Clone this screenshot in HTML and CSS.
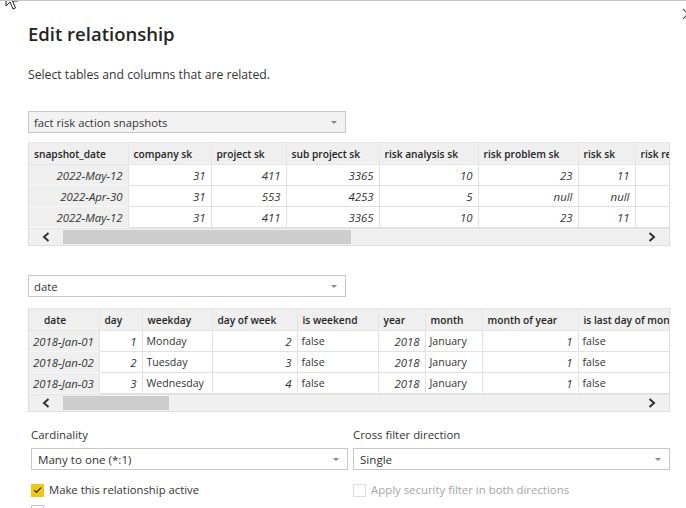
FILE: index.html
```html
<!DOCTYPE html>
<html>
<head>
<meta charset="utf-8">
<link rel="stylesheet" href="styles.css">
</head>
<body>
<div class="dialog">
  <svg class="cursor" width="14" height="22" viewBox="0 0 14 22"><path d="M1 1 L1 17 L5 13 L8 20 L10.5 19 L7.5 12 L12.5 12 Z" fill="#fff" stroke="#222" stroke-width="1"/></svg>
  <svg class="close" width="12" height="12" viewBox="0 0 12 12"><path d="M1 1 L11 11 M11 1 L1 11" stroke="#555" stroke-width="1.1" fill="none"/></svg>

  <h1 class="title">Edit relationship</h1>
  <p class="subtitle">Select tables and columns that are related.</p>

  <div class="select select-gray">
    <span>fact risk action snapshots</span>
    <span class="caret"></span>
  </div>

  <div class="grid grid-1">
    <div class="grid-clip">
      <table class="t1">
        <colgroup><col style="width:99px"><col style="width:83px"><col style="width:75px"><col style="width:93px"><col style="width:99px"><col style="width:100px"><col style="width:57px"><col style="width:90px"></colgroup>
        <thead><tr><th>snapshot_date</th><th>company sk</th><th>project sk</th><th>sub project sk</th><th>risk analysis sk</th><th>risk problem sk</th><th>risk sk</th><th>risk reason sk</th></tr></thead>
        <tbody>
          <tr><td class="key num">2022-May-12</td><td class="num">31</td><td class="num">411</td><td class="num">3365</td><td class="num">10</td><td class="num">23</td><td class="num">11</td><td></td></tr>
          <tr><td class="key num">2022-Apr-30</td><td class="num">31</td><td class="num">553</td><td class="num">4253</td><td class="num">5</td><td class="num">null</td><td class="num">null</td><td></td></tr>
          <tr><td class="key num">2022-May-12</td><td class="num">31</td><td class="num">411</td><td class="num">3365</td><td class="num">10</td><td class="num">23</td><td class="num">11</td><td></td></tr>
        </tbody>
      </table>
    </div>
    <div class="hscroll">
      <span class="arrow"><svg width="8" height="10" viewBox="0 0 8 10"><path d="M6.5 1 L2 5 L6.5 9" stroke="#333" stroke-width="2" fill="none"/></svg></span>
      <span class="thumb thumb-1"></span>
      <span class="spacer"></span>
      <span class="arrow"><svg width="8" height="10" viewBox="0 0 8 10"><path d="M1.5 1 L6 5 L1.5 9" stroke="#333" stroke-width="2" fill="none"/></svg></span>
    </div>
  </div>

  <div class="select select-white select-date">
    <span>date</span>
    <span class="caret"></span>
  </div>

  <div class="grid grid-2">
    <div class="grid-clip">
      <table class="t2">
        <colgroup><col style="width:70px"><col style="width:43px"><col style="width:70px"><col style="width:85px"><col style="width:81px"><col style="width:47px"><col style="width:57px"><col style="width:96px"><col style="width:130px"></colgroup>
        <thead><tr><th class="center">date</th><th>day</th><th>weekday</th><th>day of week</th><th>is weekend</th><th>year</th><th>month</th><th>month of year</th><th>is last day of month</th></tr></thead>
        <tbody>
          <tr><td class="key num">2018-Jan-01</td><td class="num">1</td><td>Monday</td><td class="num">2</td><td>false</td><td class="num">2018</td><td>January</td><td class="num">1</td><td>false</td></tr>
          <tr><td class="key num">2018-Jan-02</td><td class="num">2</td><td>Tuesday</td><td class="num">3</td><td>false</td><td class="num">2018</td><td>January</td><td class="num">1</td><td>false</td></tr>
          <tr><td class="key num">2018-Jan-03</td><td class="num">3</td><td>Wednesday</td><td class="num">4</td><td>false</td><td class="num">2018</td><td>January</td><td class="num">1</td><td>false</td></tr>
        </tbody>
      </table>
    </div>
    <div class="hscroll">
      <span class="arrow"><svg width="8" height="10" viewBox="0 0 8 10"><path d="M6.5 1 L2 5 L6.5 9" stroke="#333" stroke-width="2" fill="none"/></svg></span>
      <span class="thumb thumb-2"></span>
      <span class="spacer"></span>
      <span class="arrow"><svg width="8" height="10" viewBox="0 0 8 10"><path d="M1.5 1 L6 5 L1.5 9" stroke="#333" stroke-width="2" fill="none"/></svg></span>
    </div>
  </div>

  <div class="options">
    <div class="field">
      <div class="label">Cardinality</div>
      <div class="select select-white select-wide"><span>Many to one (*:1)</span><span class="caret"></span></div>
      <label class="check"><span class="box box-on"><svg width="12" height="12" viewBox="0 0 12 12"><path d="M2.5 6.2 L5 8.6 L9.8 3.4" stroke="#252423" stroke-width="1.4" fill="none"/></svg></span>Make this relationship active</label>
      <div class="check check-next"><span class="box"></span></div>
    </div>
    <div class="field">
      <div class="label">Cross filter direction</div>
      <div class="select select-white select-wide"><span>Single</span><span class="caret"></span></div>
      <label class="check disabled"><span class="box box-dis"></span>Apply security filter in both directions</label>
    </div>
  </div>
</div>
</body>
</html>
```

FILE: styles.css
```css
* { box-sizing: border-box; }
html, body { margin: 0; padding: 0; background: #fff; overflow: hidden; }
body { width: 686px; height: 508px; font-family: "Open Sans", "Noto Sans", sans-serif; color: #333; }

.dialog {
  position: relative;
  height: 508px;
  border-top: 1px solid #c4c4c4;
  padding: 0 0 0 28px;
  overflow: hidden;
}
.cursor { position: absolute; left: 5px; top: -12px; }
.close { position: absolute; left: 682px; top: 7px; }

.title {
  margin: 0;
  padding-top: 19px;
  font-size: 18.5px;
  font-weight: 600;
  line-height: 28px;
  color: #252423;
}
.subtitle {
  margin: 18px 0 0;
  font-size: 12.2px;
  line-height: 18px;
  color: #333;
}

.select {
  width: 318px;
  height: 22px;
  border: 1px solid #c8c8c8;
  display: flex;
  align-items: center;
  justify-content: space-between;
  padding: 0 8px 0 5px;
  font-size: 11.3px;
  color: #333;
}
.select-gray { background: #f2f2f2; margin-top: 27px; }
.select-white { background: #fff; }
.select-date { margin-top: 29px; }
.caret {
  width: 0; height: 0;
  border-left: 3px solid transparent;
  border-right: 3px solid transparent;
  border-top: 3px solid #888;
}

.grid {
  width: 642px;
  border: 1px solid #dedede;
  border-top: none;
}
.grid-1 { margin-top: 9px; }
.grid-2 { margin-top: 11px; }
.grid-clip { overflow: hidden; width: 640px; }
table {
  border-collapse: collapse;
  table-layout: fixed;
  font-size: 11.2px;
  white-space: nowrap;
}
.t1 { width: 696px; }
.t2 { width: 679px; }
th, td {
  overflow: hidden;
  border: 1px solid #e1e1e1;
  padding: 0 5px;
  height: 21px;
  text-align: left;
}
th {
  background: #efefef;
  font-weight: 600;
  font-size: 10.2px;
  color: #252423;
  height: 22px;
  padding-left: 5px;
  border-color: #e6e6e6;
}
tr > :first-child { border-left: none; }
th.center { padding-left: 15px; }
td { background: #fff; color: #333; font-size: 10.6px; padding-left: 4px; }
td.num { text-align: right; font-style: italic; font-size: 11.4px; padding-right: 5px; }
td.key { background: #efefef; border-color: #f8f8f8 #e1e1e1 #f8f8f8 #efefef; }

.hscroll {
  height: 17px;
  background: #f0f0f0;
  display: flex;
  align-items: center;
  border-top: 1px solid #e3e3e3;
}
.arrow { width: 34px; height: 17px; display: flex; align-items: center; justify-content: center; }
.thumb { height: 14px; background: #cdcdcd; }
.thumb-1 { width: 288px; }
.thumb-2 { width: 106px; }
.spacer { flex: 1; }

.options {
  display: flex;
  gap: 5px;
  padding-left: 3px;
  margin-top: 14px;
}
.field { width: 317px; }
.label { font-size: 11.4px; line-height: 18px; color: #333; }
.select-wide { width: 317px; height: 22px; margin-top: 4px; padding-left: 6px; font-size: 11.6px; }
.check {
  display: flex;
  align-items: center;
  gap: 5px;
  margin-top: 13px;
  font-size: 11.3px;
  line-height: 14px;
  color: #333;
}
.check-next { margin-top: 8px; }
.box {
  width: 13px; height: 13px;
  border: 1px solid #c8c8c8;
  background: #fff;
  display: flex; align-items: center; justify-content: center;
}
.box-on { background: #f2c811; border-color: #f2c811; }
.box-dis { border-color: #dcdcdc; }
.disabled { color: #a6a6a6; font-size: 11.4px; }
```
